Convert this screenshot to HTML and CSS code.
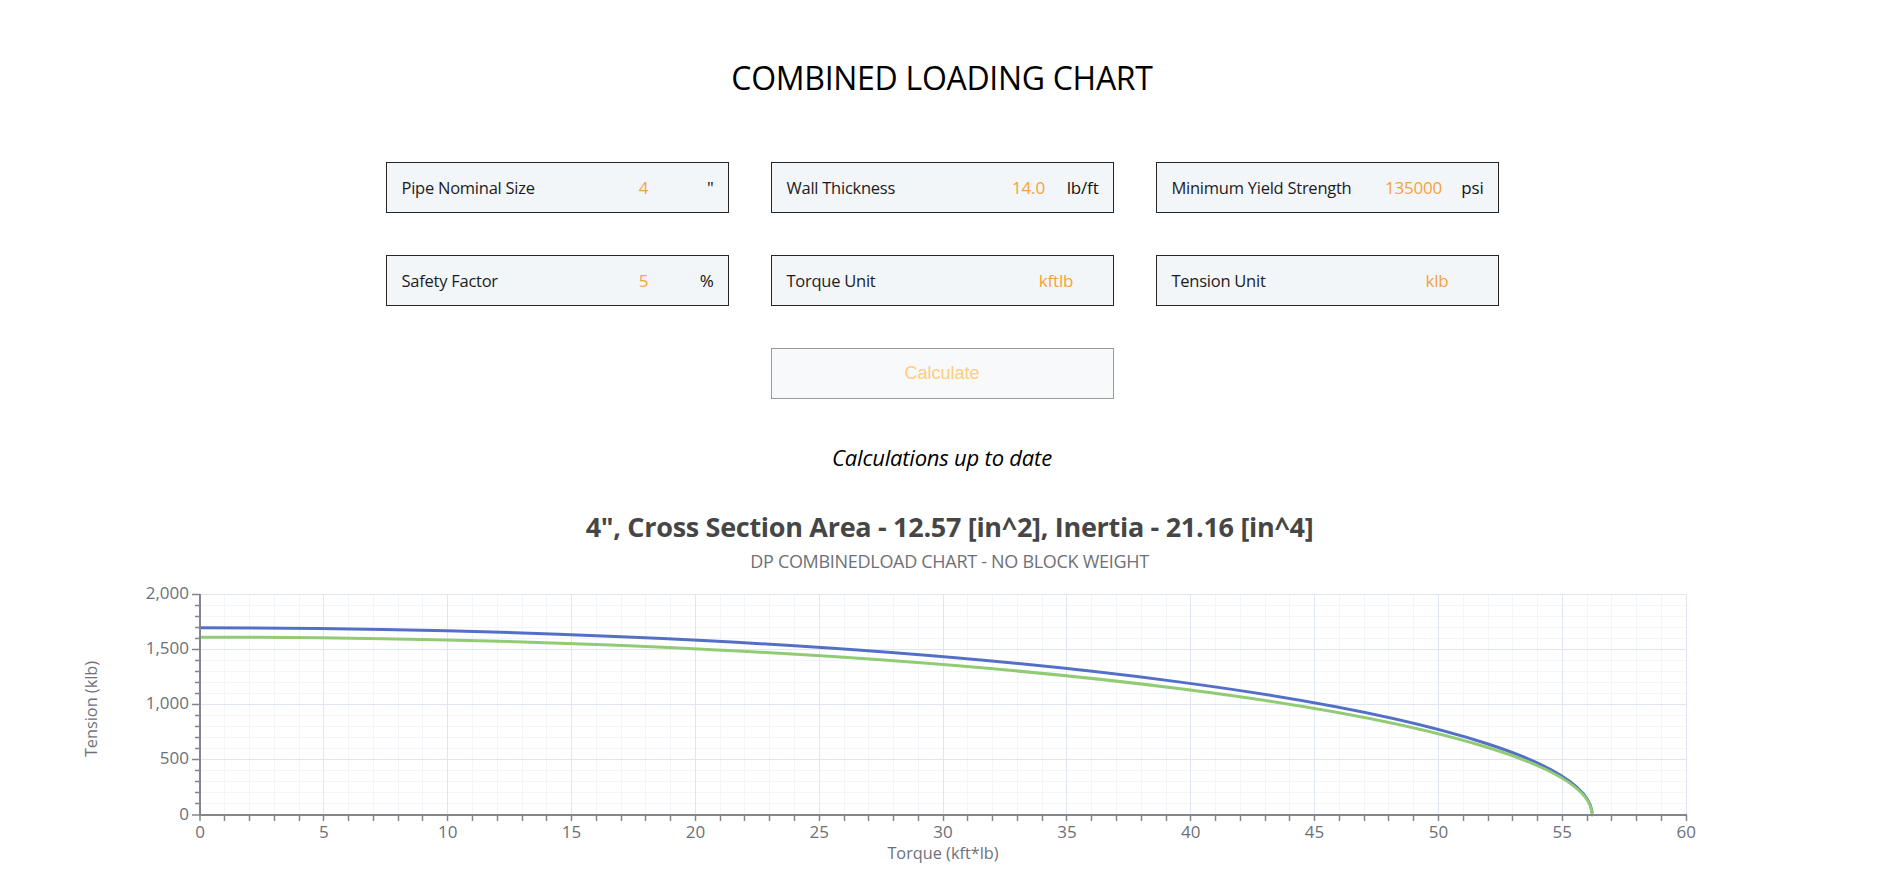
FILE: index.html
```html
<!DOCTYPE html>
<html lang="en">
<head>
<meta charset="utf-8">
<title>Combined Loading Chart</title>
<link rel="stylesheet" href="styles.css">
</head>
<body>
<div class="top-section">
  <h1 class="page-title">COMBINED LOADING CHART</h1>

  <div class="form-grid">
    <div class="field">
      <span class="field-label">Pipe Nominal Size</span>
      <span class="field-value">4</span>
      <span class="field-unit">"</span>
    </div>
    <div class="field">
      <span class="field-label">Wall Thickness</span>
      <span class="field-value">14.0</span>
      <span class="field-unit">lb/ft</span>
    </div>
    <div class="field">
      <span class="field-label">Minimum Yield Strength</span>
      <span class="field-value">135000</span>
      <span class="field-unit">psi</span>
    </div>
    <div class="field">
      <span class="field-label">Safety Factor</span>
      <span class="field-value">5</span>
      <span class="field-unit">%</span>
    </div>
    <div class="field">
      <span class="field-label">Torque Unit</span>
      <span class="field-value field-value-wide">kftlb</span>
    </div>
    <div class="field">
      <span class="field-label">Tension Unit</span>
      <span class="field-value field-value-wide field-value-klb">klb</span>
    </div>
    <button class="calc-btn" type="button">Calculate</button>
  </div>

  <p class="status">Calculations up to date</p>
</div>

<div class="chart-head">
  <h2 class="chart-title">4", Cross Section Area - 12.57 [in^2], Inertia - 21.16 [in^4]</h2>
  <p class="chart-subtitle">DP COMBINEDLOAD CHART - NO BLOCK WEIGHT</p>
</div>

<svg class="chart" width="1888" height="306" viewBox="0 580 1888 306" xmlns="http://www.w3.org/2000/svg">
  <path class="grid-minor" d="M224.5 594.5V815M249.5 594.5V815M274.5 594.5V815M299.5 594.5V815M348.5 594.5V815M373.5 594.5V815M398.5 594.5V815M422.5 594.5V815M472.5 594.5V815M497.5 594.5V815M522.5 594.5V815M546.5 594.5V815M596.5 594.5V815M621.5 594.5V815M645.5 594.5V815M670.5 594.5V815M720.5 594.5V815M744.5 594.5V815M769.5 594.5V815M794.5 594.5V815M844.5 594.5V815M868.5 594.5V815M893.5 594.5V815M918.5 594.5V815M967.5 594.5V815M992.5 594.5V815M1017.5 594.5V815M1042.5 594.5V815M1091.5 594.5V815M1116.5 594.5V815M1141.5 594.5V815M1166.5 594.5V815M1215.5 594.5V815M1240.5 594.5V815M1265.5 594.5V815M1289.5 594.5V815M1339.5 594.5V815M1364.5 594.5V815M1388.5 594.5V815M1413.5 594.5V815M1463.5 594.5V815M1488.5 594.5V815M1512.5 594.5V815M1537.5 594.5V815M1587.5 594.5V815M1611.5 594.5V815M1636.5 594.5V815M1661.5 594.5V815
  M200 803.5H1686.5M200 792.5H1686.5M200 781.5H1686.5M200 770.5H1686.5M200 748.5H1686.5M200 737.5H1686.5M200 726.5H1686.5M200 715.5H1686.5M200 693.5H1686.5M200 682.5H1686.5M200 671.5H1686.5M200 660.5H1686.5M200 638.5H1686.5M200 627.5H1686.5M200 616.5H1686.5M200 605.5H1686.5"/>
  <path class="grid-major" d="M323.5 594.5V815M447.5 594.5V815M571.5 594.5V815M695.5 594.5V815M819.5 594.5V815M943.5 594.5V815M1066.5 594.5V815M1190.5 594.5V815M1314.5 594.5V815M1438.5 594.5V815M1562.5 594.5V815M1686.5 594.5V815
  M200 759.5H1686.5M200 704.5H1686.5M200 649.5H1686.5M200 594.5H1686.5"/>

  <path class="series-blue" d="M200 627.8A1393.5 187.2 0 0 1 1592.07 812"/>
  <path class="series-green" d="M200 637.16A1392.07 177.84 0 0 1 1592.07 815"/>

  <path class="axis" d="M200 594V816M199 815H1687"/>
  <path class="axis-tick" d="M200 815v6M224.5 815v6M249.5 815v6M274.5 815v6M299.5 815v6M323.5 815v6M348.5 815v6M373.5 815v6M398.5 815v6M422.5 815v6M447.5 815v6M472.5 815v6M497.5 815v6M522.5 815v6M546.5 815v6M571.5 815v6M596.5 815v6M621.5 815v6M645.5 815v6M670.5 815v6M695.5 815v6M720.5 815v6M744.5 815v6M769.5 815v6M794.5 815v6M819.5 815v6M844.5 815v6M868.5 815v6M893.5 815v6M918.5 815v6M943.5 815v6M967.5 815v6M992.5 815v6M1017.5 815v6M1042.5 815v6M1066.5 815v6M1091.5 815v6M1116.5 815v6M1141.5 815v6M1166.5 815v6M1190.5 815v6M1215.5 815v6M1240.5 815v6M1265.5 815v6M1289.5 815v6M1314.5 815v6M1339.5 815v6M1364.5 815v6M1388.5 815v6M1413.5 815v6M1438.5 815v6M1463.5 815v6M1488.5 815v6M1512.5 815v6M1537.5 815v6M1562.5 815v6M1587.5 815v6M1611.5 815v6M1636.5 815v6M1661.5 815v6M1686.5 815v6
  M200 815h-8M200 803.5h-5M200 792.5h-5M200 781.5h-5M200 770.5h-5M200 759.5h-8M200 748.5h-5M200 737.5h-5M200 726.5h-5M200 715.5h-5M200 704.5h-8M200 693.5h-5M200 682.5h-5M200 671.5h-5M200 660.5h-5M200 649.5h-8M200 638.5h-5M200 627.5h-5M200 616.5h-5M200 605.5h-5M200 594.5h-8"/>

  <g class="tick-label tick-label-y">
    <text x="189" y="815">0</text>
    <text x="189" y="759.5">500</text>
    <text x="189" y="704.5">1,000</text>
    <text x="189" y="649.5">1,500</text>
    <text x="189" y="594.5">2,000</text>
  </g>
  <g class="tick-label tick-label-x">
    <text x="200" y="833">0</text>
    <text x="323.8" y="833">5</text>
    <text x="447.7" y="833">10</text>
    <text x="571.5" y="833">15</text>
    <text x="695.4" y="833">20</text>
    <text x="819.2" y="833">25</text>
    <text x="943.1" y="833">30</text>
    <text x="1066.9" y="833">35</text>
    <text x="1190.8" y="833">40</text>
    <text x="1314.6" y="833">45</text>
    <text x="1438.5" y="833">50</text>
    <text x="1562.3" y="833">55</text>
    <text x="1686.2" y="833">60</text>
  </g>
  <text class="axis-name" x="943" y="855">Torque (kft*lb)</text>
  <text class="axis-name" x="93" y="709" transform="rotate(-90 93 709)">Tension (klb)</text>
</svg>
</body>
</html>
```
FILE: styles.css
```css
html, body {
  margin: 0;
  padding: 0;
  background: #ffffff;
}

body {
  font-family: "Open Sans", "Noto Sans", "DejaVu Sans", sans-serif;
  color: #000;
  width: 1888px;
  overflow: hidden;
}

.top-section {
  padding-right: 4px;
}

.page-title {
  margin: 0;
  padding-top: 58px;
  font-size: 32px;
  line-height: 40px;
  font-weight: 400;
  text-align: center;
  letter-spacing: -0.3px;
}

.form-grid {
  margin-top: 64px;
  display: grid;
  grid-template-columns: repeat(3, 343px);
  grid-auto-rows: 51px;
  column-gap: 42px;
  row-gap: 42px;
  justify-content: center;
}

.field {
  box-sizing: border-box;
  border: 1px solid #262626;
  background: #f3f6f9;
  display: grid;
  grid-template-columns: 1fr 70px 35px;
  align-items: center;
  padding-left: 15px;
  padding-right: 14px;
  font-size: 16.5px;
}

.field-label {
  color: #1c1c1c;
  white-space: nowrap;
  letter-spacing: -0.25px;
}

.field-value {
  color: #f6a23a;
  text-align: center;
  font-size: 17px;
  letter-spacing: -0.2px;
}

.field-value-wide {
  grid-column: span 2;
  padding-left: 20px;
}

.field-value-klb {
  padding-left: 12px;
}

.field-unit {
  color: #111;
  text-align: right;
  font-size: 17px;
  letter-spacing: -0.2px;
  white-space: nowrap;
}

.calc-btn {
  grid-column: 2;
  box-sizing: border-box;
  border: 1px solid #9a9a9a;
  background: #f8f9fb;
  color: #ffcd7e;
  font-family: "Liberation Sans", Arial, sans-serif;
  font-size: 18px;
  padding: 0;
  margin: 0;
}

.status {
  margin: 43px 0 0;
  font-size: 22px;
  line-height: 30px;
  font-style: italic;
  text-align: center;
  color: #000;
  letter-spacing: -0.2px;
}

.chart-head {
  padding-left: 11px;
}

.chart-title {
  margin: 39px 0 0;
  font-size: 27px;
  line-height: 32px;
  font-weight: 700;
  color: #464646;
  text-align: center;
  letter-spacing: -0.3px;
}

.chart-subtitle {
  margin: 7px 0 0;
  font-size: 18px;
  line-height: 22px;
  color: #6e7079;
  text-align: center;
  letter-spacing: -0.3px;
}

.chart {
  display: block;
  margin-top: 8px;
}

.grid-minor {
  fill: none;
  stroke: #f3f5fa;
  stroke-width: 1;
}

.grid-major {
  fill: none;
  stroke: #e0e6f1;
  stroke-width: 1;
}

.series-blue,
.series-green {
  fill: none;
  stroke-width: 3;
  stroke-linejoin: round;
  stroke-linecap: round;
}

.series-blue {
  stroke: #5470c6;
}

.series-green {
  stroke: #91cc75;
}

.axis {
  fill: none;
  stroke: #85858f;
  stroke-width: 2;
}

.axis-tick {
  fill: none;
  stroke: #85858f;
  stroke-width: 1.5;
}

.tick-label text,
.axis-name {
  font-family: "Open Sans", "Noto Sans", sans-serif;
  font-size: 17px;
  fill: #6e7079;
  dominant-baseline: middle;
}

.axis-name {
  font-size: 16.3px;
}

.tick-label-y text {
  text-anchor: end;
}

.tick-label-x text,
.axis-name {
  text-anchor: middle;
}
```
